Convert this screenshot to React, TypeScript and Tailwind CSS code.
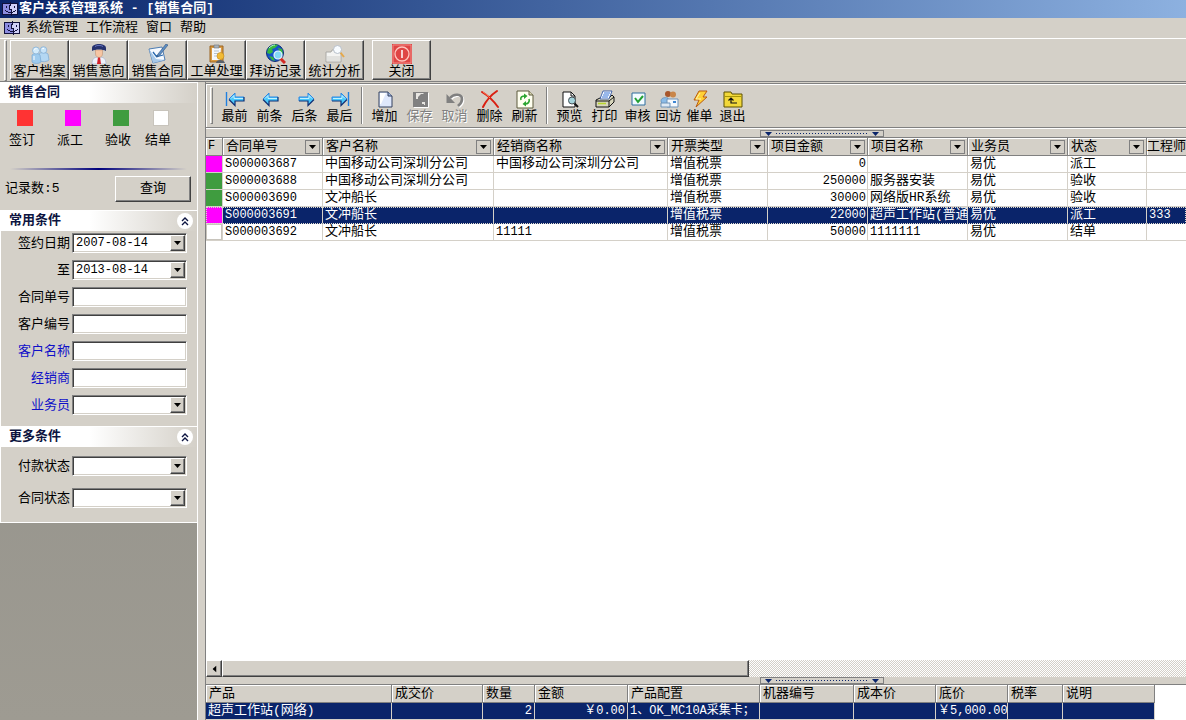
import { useState, type ReactNode } from "react";

type Contract = {
  id: string;
  customer: string;
  dealer: string;
  invoice: string;
  amount: string;
  project: string;
  sales: string;
  status: string;
  engineer: string;
};

const contracts: Contract[] = [
  { id: "S000003687", customer: "中国移动公司深圳分公司", dealer: "中国移动公司深圳分公司", invoice: "增值税票", amount: "0", project: "", sales: "易优", status: "派工", engineer: "" },
  { id: "S000003688", customer: "中国移动公司深圳分公司", dealer: "", invoice: "增值税票", amount: "250000", project: "服务器安装", sales: "易优", status: "验收", engineer: "" },
  { id: "S000003690", customer: "文冲船长", dealer: "", invoice: "增值税票", amount: "30000", project: "网络版HR系统", sales: "易优", status: "验收", engineer: "" },
  { id: "S000003691", customer: "文冲船长", dealer: "", invoice: "增值税票", amount: "22000", project: "超声工作站(普通", sales: "易优", status: "派工", engineer: "333" },
  { id: "S000003692", customer: "文冲船长", dealer: "11111", invoice: "增值税票", amount: "50000", project: "1111111", sales: "易优", status: "结单", engineer: "" },
];

const statusColors: Record<string, string> = {
  签订: "bg-[#ff3333]",
  派工: "bg-[#ff00ff]",
  验收: "bg-[#3f9c3f]",
  结单: "bg-white border border-[#c8c4bc]",
};

const columns = [
  { title: "合同单号", width: "w-[100px]" },
  { title: "客户名称", width: "w-[171px]" },
  { title: "经销商名称", width: "w-[174px]" },
  { title: "开票类型", width: "w-[100px]" },
  { title: "项目金额", width: "w-[100px]" },
  { title: "项目名称", width: "w-[100px]" },
  { title: "业务员", width: "w-[100px]" },
  { title: "状态", width: "w-[79px]" },
];

const productColumns = [
  { title: "产品", width: "w-[186px]", value: "超声工作站(网络)", cell: "" },
  { title: "成交价", width: "w-[91px]", value: "", cell: "" },
  { title: "数量", width: "w-[52px]", value: "2", cell: "text-right text-xs" },
  { title: "金额", width: "w-[93px]", value: "￥0.00", cell: "text-right text-xs" },
  { title: "产品配置", width: "w-[132px]", value: "1、OK_MC10A采集卡；", cell: "text-xs" },
  { title: "机器编号", width: "w-[94px]", value: "", cell: "" },
  { title: "成本价", width: "w-[82px]", value: "", cell: "" },
  { title: "底价", width: "w-[72px]", value: "￥5,000.00", cell: "text-xs" },
  { title: "税率", width: "w-[55px]", value: "", cell: "" },
  { title: "说明", width: "w-[92px]", value: "", cell: "" },
];

const raised =
  "border border-t-white border-l-white border-r-[#404040] border-b-[#404040] shadow-[inset_-1px_-1px_0_#808080]";
const sunken =
  "border border-t-[#808080] border-l-[#808080] border-r-white border-b-white bg-white shadow-[inset_1px_1px_0_#404040,inset_-1px_-1px_0_#d4d0c8]";

function Svg({ children, size = "size-5" }: { children: ReactNode; size?: string }) {
  return (
    <svg viewBox="0 0 20 20" className={`${size} shrink-0`} aria-hidden="true">
      {children}
    </svg>
  );
}

function AppIcon() {
  return (
    <svg viewBox="0 0 16 14" className="h-[14px] w-4 shrink-0" shapeRendering="crispEdges" aria-hidden="true">
      <path d="M0 1h16v12H0z" fill="#11113c" />
      <path d="M1 2h7v6h1v4H1z" fill="#8c8ce0" />
      <path d="M9 2h6v10h-5V7H8z" fill="#d0d0f8" />
      <path d="M4 4h1v2H4zM12 4h1v2h-1zM8 0h1v3H8zM7 3h1v4H7zM7 7h3v1H7zM9 8h1v6H9zM3 8h1v1H3zM4 9h2v1H4zM6 10h5v1H6zM11 9h2v1h-2zM13 8h1v1h-1z" fill="#11113c" />
    </svg>
  );
}

/* module bar icons */

const moduleIcons: Record<string, ReactNode> = {
  客户档案: (
    <Svg>
      <g stroke="#7ba9d2" strokeWidth=".7">
        <path d="M9 10c1-2 7-2 9 0l1 6c-2 2-7 2-9 1z" fill="#b4d7f3" />
        <circle cx="13.500" cy="6" r="3.300" fill="#c8e3f8" />
        <path d="M2 11c2-2 6-2 8 0l1 7c-2 2-7 2-9 0z" fill="#9ecbee" />
        <circle cx="6" cy="6.500" r="3.500" fill="#d3ebfb" />
      </g>
      <path d="M4.500 6c0-1 1-1.500 2-1.500M4 12v4M12 5c.5-.6 1-.7 2-.5" stroke="#fff" fill="none" />
    </Svg>
  ),
  销售意向: (
    <Svg>
      <path d="M3 20c0-5 2-7 7-7s7 2 7 7z" fill="#eef2fb" stroke="#a8b3cf" strokeWidth=".7" />
      <path d="m9 13-1 7h4l-1-7z" fill="#d4212a" />
      <path d="M6.500 6h7v4c0 2-2 3.500-3.500 3.500S6.500 12 6.500 10z" fill="#f6c6a4" stroke="#b98668" strokeWidth=".5" />
      <path d="M3 7V4c0-3 4-4 7-4s7 1 7 4v3c-2-1-4-1.500-7-1.500S5 6 3 7z" fill="#26326e" />
      <path d="M6 2.500c2-1.500 6-1.500 8 0" stroke="#6573bd" fill="none" />
    </Svg>
  ),
  销售合同: (
    <Svg>
      <path d="m1 5 13-2 3 13-12 3z" fill="#f6faff" stroke="#4e7db3" />
      <path d="m1 5 4 14 12-3-9-1z" fill="#a7c8e8" />
      <path d="m5 8 3 4 2-1M8 13l7-2" stroke="#2667ad" strokeWidth="1.300" fill="none" />
      <path d="m10 10 8-10 2 1-8 10-3 2z" fill="#5d8fc5" stroke="#31517b" strokeWidth=".6" />
    </Svg>
  ),
  工单处理: (
    <Svg>
      <path d="M3 2h13v16H3z" fill="#d99a42" stroke="#9a6423" />
      <path d="M5 4h9l-1 12H5z" fill="#f5f8fc" />
      <path d="M7 1h5v3H7z" fill="#a8b1ba" stroke="#6b737b" strokeWidth=".6" />
      <path d="M7 7h5M7 9.500h4M7 12h3" stroke="#b7c2ce" />
      <path d="M9 19c0-4 8-4 9 0z" fill="#59616b" />
      <circle cx="13.500" cy="12" r="3.500" fill="#f2bb35" stroke="#c18717" strokeWidth=".6" />
    </Svg>
  ),
  拜访记录: (
    <Svg>
      <circle cx="9" cy="9" r="8.500" fill="#1554c8" stroke="#0e2d78" />
      <path d="M2 5c3-5 8-5 10-4L9 4 6 5l1 3-3 2-3-1zM12 4l4 1 1 5-3-1zM3 12l4 1 2 4-3-1z" fill="#36b83e" />
      <path d="M3 4c2-2 4-3 6-3" stroke="#b4f1d1" fill="none" />
      <path d="m14 14 5 5" stroke="#d32b25" strokeWidth="3" />
      <circle cx="12" cy="11" r="4" fill="#83d8f4" stroke="#e9f8ff" strokeWidth="1.200" />
    </Svg>
  ),
  统计分析: (
    <Svg>
      <path d="M1 8h5l1-2h6l3 4v8H1z" fill="#f4f4f2" stroke="#aaa9a5" />
      <path d="M2 12h13v5H2z" fill="#e2e2df" />
      <path d="m15 8 4 5" stroke="#e6a849" strokeWidth="2" />
      <circle cx="12.500" cy="5.500" r="4" fill="#f8fcff" stroke="#b7bfc9" />
    </Svg>
  ),
  关闭: (
    <Svg>
      <path d="M0 0h20v20H0z" fill="#df4545" />
      <path d="M1 1h18v18H1z" fill="none" stroke="#f08d87" />
      <circle cx="10" cy="10" r="7" fill="none" stroke="#ffc4bd" strokeWidth="1.300" />
      <path d="M10 6v8" stroke="#fff" strokeWidth="1.500" />
    </Svg>
  ),
};

/* record bar icons */

const recordIcons: Record<string, ReactNode> = {
  最前: (
    <Svg>
      <path d="M1.500 3v14" stroke="#1f7fe0" strokeWidth="1.400" />
      <path d="m4 10 6-6v4h9v4h-9v4z" fill="#49c7fa" />
      <path d="m4 10 6-6v4h9" stroke="#2c86e4" fill="none" />
      <path d="m4 10.500 6 6V12h9V8" stroke="#0b2d74" strokeWidth="1.200" fill="none" />
      <path d="m6 9.500 3-3v3h9" stroke="#c3f2ff" fill="none" />
    </Svg>
  ),
  前条: (
    <Svg>
      <path d="m3 10 6-6v4h9v4H9v4z" fill="#49c7fa" />
      <path d="m3 10 6-6v4h9" stroke="#2c86e4" fill="none" />
      <path d="m3 10.500 6 6V12h9V8" stroke="#0b2d74" strokeWidth="1.200" fill="none" />
      <path d="m5 9.500 3-3v3h9" stroke="#c3f2ff" fill="none" />
    </Svg>
  ),
  后条: (
    <Svg>
      <path d="m19 10-6-6v4H4v4h9v4z" fill="#49c7fa" />
      <path d="M4 12V8h9V4l6 6" stroke="#2c86e4" fill="none" />
      <path d="M4 12h9v4.500l6-6" stroke="#0b2d74" strokeWidth="1.200" fill="none" />
      <path d="M5 9.500h9v-3l3 3" stroke="#c3f2ff" fill="none" />
    </Svg>
  ),
  最后: (
    <Svg>
      <path d="M18.500 3v14" stroke="#1f7fe0" strokeWidth="1.400" />
      <path d="m17 10-6-6v4H2v4h9v4z" fill="#49c7fa" />
      <path d="M2 12V8h9V4l6 6" stroke="#2c86e4" fill="none" />
      <path d="M2 12h9v4.500l6-6" stroke="#0b2d74" strokeWidth="1.200" fill="none" />
      <path d="M3 9.500h9v-3l3 3" stroke="#c3f2ff" fill="none" />
    </Svg>
  ),
  增加: (
    <Svg>
      <path d="M4 3h9l4 4v11H4z" fill="#dfe8fc" stroke="#33405f" />
      <path d="M5 4h6l-5 11H5z" fill="#fff" />
      <path d="M13 3v4h4" fill="#9fb4df" stroke="#33405f" />
    </Svg>
  ),
  保存: (
    <Svg>
      <path d="M18.500 4v14.500H4" stroke="#fff" fill="none" />
      <path d="M3 3h15v15H3z" fill="#808080" />
      <path d="M6 4h8l-1 1h-2L8 8v2H6zM12 13h3v3h-1v-1h-2z" fill="#e8e6e2" />
    </Svg>
  ),
  取消: (
    <Svg>
      <path d="M6 10c4-5 12-4 12 1 0 4-2 5-4 7" fill="none" stroke="#fff" strokeWidth="2.600" />
      <path d="M5 9c4-5 12-4 12 1 0 4-2 5-4 7" fill="none" stroke="#808080" strokeWidth="2.600" />
      <path d="M1.500 5v9H10z" fill="#808080" />
    </Svg>
  ),
  删除: (
    <Svg>
      <path d="M2 3c5 3 11 8 16 15M17 2C11 6 6 12 3 18" fill="none" stroke="#d92012" strokeWidth="2" strokeLinecap="round" />
      <path d="M3 3c3 2 5 4 7 6" stroke="#ff7a58" fill="none" />
    </Svg>
  ),
  刷新: (
    <Svg>
      <path d="M2 2h12l4 4v13H2z" fill="#fffff0" stroke="#5d5a3c" />
      <path d="M14 2v4h4" fill="#d9d6b4" stroke="#5d5a3c" />
      <path d="M6 11c-1-3 1-4 4-4M14 10c1 3-1 5-4 5" fill="none" stroke="#2aa52f" strokeWidth="1.600" />
      <path d="m9 4.500 3.500 2.500L9 10zM11 12l-3.500 3 3.500 2.500z" fill="#2aa52f" />
    </Svg>
  ),
  预览: (
    <Svg>
      <path d="M3 3h8l4 4v11H3z" fill="#fff" stroke="#111" />
      <path d="M11 3v4h4" fill="none" stroke="#111" />
      <path d="m14 14 4 4" stroke="#111" strokeWidth="2" />
      <circle cx="12" cy="11.500" r="3.500" fill="#a5d4dc" stroke="#454f54" />
    </Svg>
  ),
  打印: (
    <Svg>
      <path d="m1 11 4-2h9l3-3 2 2v5l-5 5H1z" fill="#d8d6bc" stroke="#111" />
      <path d="m5 10 3-8h9l-3 8z" fill="#f6faff" stroke="#234a9d" strokeWidth=".8" />
      <path d="M9 4h6M8 6h6M7 8h6" stroke="#3a74d6" />
      <path d="M1 12h13l5-4M14 12v6" stroke="#111" fill="none" />
      <path d="M3 14.500h8" stroke="#b9d42d" strokeWidth="1.500" />
    </Svg>
  ),
  审核: (
    <Svg>
      <path d="M4 4h13v12H4z" fill="#f2fbff" stroke="#2f6f9e" />
      <path d="m7 9 3 4 5-6" fill="none" stroke="#23a033" strokeWidth="2" />
    </Svg>
  ),
  回访: (
    <Svg>
      <circle cx="9" cy="5" r="3" fill="#a8562a" />
      <circle cx="14" cy="5.500" r="3" fill="#c98649" />
      <path d="M2 12c0-3 3-4 7-3v6H3z" fill="#8bbbe6" stroke="#4c7fb2" strokeWidth=".6" />
      <path d="M8 10h11v8H8z" fill="#f4f8fc" stroke="#6f93b8" />
      <path d="M2 14h9v4H2z" fill="#dfe9f3" stroke="#6f93b8" />
      <path d="M14 12h3v2h-3z" fill="#3e86d2" />
    </Svg>
  ),
  催单: (
    <Svg>
      <path d="M9 2h8l-4 6h4L6 18l3-7H4z" fill="#ffd034" stroke="#b85a12" />
      <path d="m10 4-4 6h5" stroke="#fff6ae" fill="none" />
    </Svg>
  ),
  退出: (
    <Svg>
      <path d="M1 3h7l1 2h10v13H1z" fill="#f2d83a" stroke="#5c5000" />
      <path d="M2 7.500h16" stroke="#a89704" fill="none" />
      <path d="M8 9v5h6M5.500 11.500 8 9l2.500 2.500" fill="none" stroke="#111" strokeWidth="1.200" />
    </Svg>
  ),
};

function ModuleButton({ name }: { name: string }) {
  return (
    <button type="button" className={`flex h-10 w-[59px] flex-col items-center whitespace-nowrap pt-[3px] ${raised}`}>
      {moduleIcons[name]}
      <span className="leading-4">{name}</span>
    </button>
  );
}

function RecordButton({ name, narrow = false, disabled = false }: { name: string; narrow?: boolean; disabled?: boolean }) {
  return (
    <button
      type="button"
      disabled={disabled}
      className={`flex shrink-0 flex-col items-center whitespace-nowrap ${narrow ? "w-[31px]" : "w-[35px]"} ${
        disabled ? "text-[#808080] [text-shadow:1px_1px_0_#fff]" : ""
      }`}
    >
      {recordIcons[name]}
      <span className="leading-4">{name}</span>
    </button>
  );
}

function Separator() {
  return <div className="mx-1 w-[2px] self-stretch border-l border-r border-l-[#808080] border-r-white" />;
}

function Grip() {
  return <div className="w-[3px] self-stretch border border-t-white border-r-[#808080] border-b-[#808080] border-l-white" />;
}

function DownArrow({ className = "" }: { className?: string }) {
  return (
    <svg viewBox="0 0 7 4" className={`h-1 w-[7px] ${className}`} aria-hidden="true">
      <path d="M0 0h7L3.500 4z" fill="currentColor" />
    </svg>
  );
}

function DropFace() {
  return (
    <span className={`pointer-events-none absolute inset-y-[2px] right-[2px] flex w-[15px] items-center justify-center bg-[#d4d0c8] ${raised}`}>
      <DownArrow />
    </span>
  );
}

function Field({ id, label, kind, value, link = false }: { id: string; label: string; kind: "text" | "date" | "select"; value?: string; link?: boolean }) {
  return (
    <div className="flex h-5 items-center gap-[2px] pr-[10px]">
      <label htmlFor={id} className={`w-[69px] shrink-0 pt-[2px] text-right ${link ? "text-[#1010c8]" : ""}`}>
        {label}
      </label>
      <div className="relative h-5 min-w-0 flex-1">
        {kind === "select" ? (
          <select id={id} className={`h-full w-full appearance-none px-1 outline-none ${sunken}`}>
            <option />
          </select>
        ) : (
          <input id={id} type="text" defaultValue={value} className={`block h-full w-full px-[3px] text-xs outline-none ${sunken}`} />
        )}
        {kind !== "text" ? <DropFace /> : null}
      </div>
    </div>
  );
}

function PanelHeader({ title, open, onToggle }: { title: string; open?: boolean; onToggle?: () => void }) {
  return (
    <div className="flex h-[21px] items-center justify-between border-t border-white bg-linear-to-r from-white from-45% to-[#d4d0c8] pr-1 pl-2 font-bold text-[#0c1440]">
      <h2>{title}</h2>
      {onToggle ? (
        <button type="button" aria-label={title} aria-expanded={open} onClick={onToggle} className="flex size-4 items-center justify-center rounded-full bg-white">
          <svg viewBox="0 0 8 9" className={`h-[9px] w-2 ${open ? "" : "rotate-180"}`} aria-hidden="true">
            <path d="m1 4 3-3 3 3M1 8l3-3 3 3" fill="none" stroke="#0c1440" strokeWidth="1.400" />
          </svg>
        </button>
      ) : null}
    </div>
  );
}

function Sidebar() {
  const [showCommon, setShowCommon] = useState(true);
  const [showMore, setShowMore] = useState(true);

  return (
    <aside className="flex w-[198px] shrink-0 flex-col border-r border-white bg-linear-to-b from-[#8f8e88] to-[#9e9b92]">
      <section className="bg-[#d4d0c8]">
        <PanelHeader title="销售合同" />
        <ul className="flex pt-[7px] pl-[9px]">
          {["签订", "派工", "验收", "结单"].map((status) => (
            <li key={status} className={status === "验收" ? "w-10" : "w-12"}>
              <div className={`ml-2 size-4 ${statusColors[status]}`} />
              <div className="mt-[7px]">{status}</div>
            </li>
          ))}
        </ul>
        <div className="mx-[10px] mt-[19px] h-[2px] bg-linear-to-r from-transparent via-[#00007c] to-transparent" />
        <div className="flex items-center justify-between pt-[6px] pr-[6px] pb-2 pl-[5px]">
          <span>记录数:5</span>
          <button type="button" className={`h-[26px] w-[76px] ${raised}`}>
            查询
          </button>
        </div>
      </section>

      <section className="border-l border-white bg-[#d4d0c8]">
        <PanelHeader title="常用条件" open={showCommon} onToggle={() => setShowCommon(!showCommon)} />
        {showCommon ? (
          <div className="flex flex-col gap-[7px] pt-[2px] pb-[11px]">
            <Field id="from" label="签约日期" kind="date" value="2007-08-14" />
            <Field id="to" label="至" kind="date" value="2013-08-14" />
            <Field id="contract-no" label="合同单号" kind="text" />
            <Field id="customer-no" label="客户编号" kind="text" />
            <Field id="customer-name" label="客户名称" kind="text" link />
            <Field id="dealer" label="经销商" kind="text" link />
            <Field id="sales" label="业务员" kind="select" link />
          </div>
        ) : null}
      </section>

      <section className="border-b border-l border-white bg-[#d4d0c8]">
        <PanelHeader title="更多条件" open={showMore} onToggle={() => setShowMore(!showMore)} />
        {showMore ? (
          <div className="flex flex-col gap-3 pt-[9px] pb-[14px]">
            <Field id="pay-status" label="付款状态" kind="select" />
            <Field id="contract-status" label="合同状态" kind="select" />
          </div>
        ) : null}
      </section>
    </aside>
  );
}

function Splitter() {
  return (
    <div className="flex h-[7px] shrink-0">
      <div className="ml-[554px] flex w-[124px] shrink-0 items-center gap-1 border border-[#808080] px-1 text-[#0a246a]">
        <DownArrow />
        <span className="h-px flex-1 bg-[repeating-linear-gradient(to_right,#0a246a_0_1px,transparent_1px_3px)]" />
        <DownArrow />
      </div>
    </div>
  );
}

const headCell =
  "h-[18px] overflow-hidden whitespace-nowrap border-r border-b border-r-[#808080] border-b-[#808080] bg-[#d4d0c8] p-0 text-left font-normal leading-[17px] shadow-[inset_1px_1px_0_#fff]";

function ContractTable() {
  const [selected, setSelected] = useState("S000003691");

  return (
    <table className="w-full table-fixed border-separate border-spacing-0">
      <colgroup>
        <col className="w-[17px]" />
        {columns.map((column) => (
          <col key={column.title} className={column.width} />
        ))}
        <col />
      </colgroup>
      <thead>
        <tr>
          <th className={`${headCell} text-xs`}>
            <span className="pl-[2px]">F</span>
          </th>
          {columns.map((column) => (
            <th key={column.title} className={headCell}>
              <div className="flex items-center justify-between pr-[2px] pl-[3px]">
                {column.title}
                <button type="button" aria-label={column.title} className="flex h-[14px] w-[15px] items-center justify-center border border-[#808080]">
                  <DownArrow />
                </button>
              </div>
            </th>
          ))}
          <th className={`${headCell} border-r-0`}>工程师</th>
        </tr>
      </thead>
      <tbody>
        {contracts.map((row) => {
          const isSelected = row.id === selected;
          const cell = `h-[17px] overflow-hidden whitespace-nowrap border-r border-b border-[#d4d0c8] py-0 pr-px pl-[2px] leading-4 ${
            isSelected ? "border-b-[#0a246a] bg-[#0a246a] text-white" : ""
          }`;
          return (
            <tr
              key={row.id}
              onClick={() => setSelected(row.id)}
              className={isSelected ? "outline-1 -outline-offset-1 outline-dotted outline-[#e0dccf]" : ""}
            >
              <td className="border-r border-b border-[#d4d0c8] p-0">
                <div className={`h-4 ${statusColors[row.status]}`} />
              </td>
              <td className={`${cell} text-xs`}>{row.id}</td>
              <td className={cell}>{row.customer}</td>
              <td className={`${cell} ${row.dealer === "11111" ? "text-xs" : ""}`}>{row.dealer}</td>
              <td className={cell}>{row.invoice}</td>
              <td className={`${cell} text-right text-xs`}>{row.amount}</td>
              <td className={`${cell} ${row.project === "1111111" ? "text-xs" : ""}`}>{row.project}</td>
              <td className={cell}>{row.sales}</td>
              <td className={cell}>{row.status}</td>
              <td className={`${cell} border-r-0 text-xs`}>{row.engineer}</td>
            </tr>
          );
        })}
      </tbody>
    </table>
  );
}

function ProductTable() {
  return (
    <table className="w-[949px] table-fixed border-separate border-spacing-0">
      <colgroup>
        {productColumns.map((column) => (
          <col key={column.title} className={column.width} />
        ))}
      </colgroup>
      <thead>
        <tr>
          {productColumns.map((column) => (
            <th key={column.title} className={headCell}>
              <span className="pl-[3px]">{column.title}</span>
            </th>
          ))}
        </tr>
      </thead>
      <tbody>
        <tr>
          {productColumns.map((column) => (
            <td
              key={column.title}
              className={`h-[17px] overflow-hidden border-r border-b border-[#d4d0c8] bg-[#0a246a] py-0 pr-[2px] pl-[2px] leading-4 whitespace-nowrap text-white ${column.cell}`}
            >
              {column.value}
            </td>
          ))}
        </tr>
      </tbody>
    </table>
  );
}

export default function App() {
  return (
    <div className="flex h-screen flex-col overflow-hidden bg-[#d4d0c8] font-['Liberation_Mono','Noto_Sans_CJK_SC',monospace] text-[13px] leading-4 text-black">
      <header className="flex h-[18px] shrink-0 items-center gap-px bg-linear-to-r from-[#0a246a] to-[#8db1e0] pl-[2px] font-bold text-white">
        <AppIcon />
        <h1 className="whitespace-pre">客户关系管理系统 - [销售合同]</h1>
      </header>

      <nav className="flex h-[21px] shrink-0 items-center gap-[6px] border-b border-white pl-1">
        <AppIcon />
        <div className="flex gap-2">
          {["系统管理", "工作流程", "窗口", "帮助"].map((item) => (
            <button key={item} type="button">
              {item}
            </button>
          ))}
        </div>
      </nav>

      <div className="flex h-[43px] shrink-0 border-b border-[#808080] pt-px pl-1">
        <Grip />
        <div className="ml-[3px] flex">
          {["客户档案", "销售意向", "销售合同", "工单处理", "拜访记录", "统计分析"].map((name) => (
            <ModuleButton key={name} name={name} />
          ))}
        </div>
        <div className="ml-2">
          <ModuleButton name="关闭" />
        </div>
      </div>

      <div className="flex min-h-0 flex-1">
        <Sidebar />

        <main className="ml-[7px] flex min-w-0 flex-1 flex-col border-l border-[#808080]">
          <div className="mt-px mb-[2px] flex h-[45px] shrink-0 items-center border-t border-b border-t-[#808080] border-b-[#808080] py-[3px] pl-1 shadow-[inset_1px_1px_0_#fff,0_1px_0_#fff]">
            <Grip />
            <div className="ml-1 flex pt-[2px]">
              {["最前", "前条", "后条", "最后"].map((name) => (
                <RecordButton key={name} name={name} />
              ))}
            </div>
            <Separator />
            <div className="flex pt-[2px]">
              {["增加", "保存", "取消", "删除", "刷新"].map((name) => (
                <RecordButton key={name} name={name} disabled={name === "保存" || name === "取消"} />
              ))}
            </div>
            <Separator />
            <div className="flex pt-[2px]">
              <RecordButton name="预览" />
              <RecordButton name="打印" />
              <RecordButton name="审核" narrow />
              <RecordButton name="回访" narrow />
              <RecordButton name="催单" narrow />
              <RecordButton name="退出" />
            </div>
          </div>

          <Splitter />

          <div className="flex min-h-0 flex-1 flex-col border-t border-[#808080] bg-white">
            <div className="min-h-0 flex-1 overflow-hidden">
              <ContractTable />
            </div>
            <div className="flex h-[17px] shrink-0 bg-[repeating-conic-gradient(#d4d0c8_0_25%,#fff_0_50%)] bg-size-[2px_2px]">
              <button type="button" aria-label="向左滚动" className={`flex w-4 items-center justify-center bg-[#d4d0c8] ${raised}`}>
                <DownArrow className="rotate-90" />
              </button>
              <div className={`w-[527px] bg-[#d4d0c8] ${raised}`} />
            </div>
          </div>

          <Splitter />

          <div className="shrink-0 border-t border-[#808080] bg-white">
            <ProductTable />
          </div>
        </main>
      </div>
    </div>
  );
}
